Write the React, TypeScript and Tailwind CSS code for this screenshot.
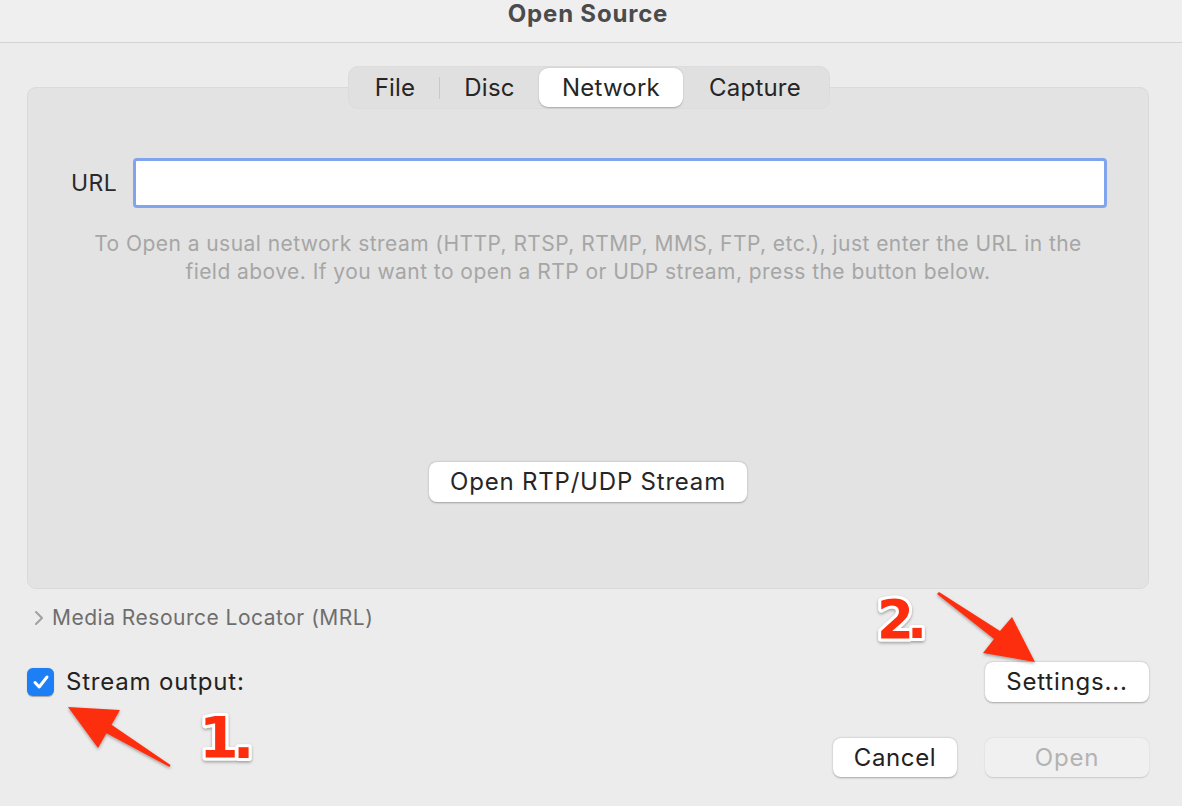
import React from "react";

function Arrows() {
  return (
    <svg className="absolute inset-0 pointer-events-none" width="1182" height="806" viewBox="0 0 1182 806">
      <defs>
        <filter id="sh" x="-20%" y="-20%" width="140%" height="140%">
          <feDropShadow dx="0" dy="1.5" stdDeviation="1.5" floodColor="#000" floodOpacity="0.35" />
        </filter>
      </defs>
      <polygon
        points="68,707 120,710 111.5,724.7 170.5,765.1 169.5,766.9 106.5,733.3 98,748"
        fill="#fc2f0c"
        filter="url(#sh)"
      />
      <polygon
        points="939,592 1000,631 1012,617 1035,662 983,653 994,639 937,594"
        fill="#fc2f0c"
        filter="url(#sh)"
      />
      <text
        x="199"
        y="758"
        fontFamily="'DejaVu Sans', 'Liberation Sans', sans-serif"
        fontWeight="bold"
        fontSize="57"
        fill="#fc2f0c"
        stroke="#ffffff"
        strokeWidth="6"
        strokeLinejoin="round"
        paintOrder="stroke"
        filter="url(#sh)"
        letterSpacing="-6"
      >
        1.
      </text>
      <text
        x="877"
        y="638"
        fontFamily="'DejaVu Sans', 'Liberation Sans', sans-serif"
        fontWeight="bold"
        fontSize="53"
        fill="#fc2f0c"
        stroke="#ffffff"
        strokeWidth="6"
        strokeLinejoin="round"
        paintOrder="stroke"
        filter="url(#sh)"
        letterSpacing="-7"
      >
        2.
      </text>
    </svg>
  );
}

export default function App() {
  return (
    <div className="relative w-[1182px] h-[806px] bg-[#ececec] flex flex-col overflow-hidden font-['Inter','Noto_Sans',sans-serif] text-[#222]">
      {/* Title bar */}
      <div className="h-[43px] shrink-0 bg-[#efefef] border-b border-[#d3d3d3] flex items-center justify-center">
        <span className="text-[24px] font-bold text-[#4b4b4b] tracking-[0.8px] -mt-[14px] -ml-[6px]">Open Source</span>
      </div>

      {/* Body */}
      <div className="flex flex-col px-[27px] pr-[33px]">
        {/* Tabs + panel */}
        <div className="flex flex-col mt-[23px]">
          <div className="relative z-10 self-center ml-[2px] flex items-center h-[43px] rounded-[10px] bg-[#e0e0e0] border border-[#dcdcdc] px-[2px] text-[24px] tracking-[0.2px] text-[#262626]">
            <div className="w-[88px] flex justify-center">File</div>
            <div className="w-px h-[22px] bg-[#c8c8c8]" />
            <div className="w-[99px] flex justify-center">Disc</div>
            <div className="w-[144px] h-[39px] rounded-[9px] bg-white shadow-[0_0.5px_1.5px_rgba(0,0,0,0.25)] flex items-center justify-center">Network</div>
            <div className="w-[144px] flex justify-center">Capture</div>
          </div>
          <div className="-mt-[22px] h-[502px] rounded-[9px] bg-[#e3e3e3] border border-[#dadada] flex flex-col">
            <div className="mt-[70px] flex items-center">
              <span className="w-[105px] pl-[43px] text-[23px] tracking-[0.4px] text-[#2a2a2a]">URL</span>
              <div className="w-[974px] h-[50px] rounded-[4px] border-[3px] border-[#81a5ec] bg-white" />
            </div>
            <div className="mt-[22px] text-center text-[21px] tracking-[0.45px] leading-[28px] text-[#a6a6a6]">
              To Open a usual network stream (HTTP, RTSP, RTMP, MMS, FTP, etc.), just enter the URL in the
              <br />
              field above. If you want to open a RTP or UDP stream, press the button below.
            </div>
            <div className="mt-[176px] flex justify-center">
              <div className="w-[318px] h-[40px] rounded-[8px] bg-white shadow-[0_0.5px_2px_rgba(0,0,0,0.3)] flex items-center justify-center text-[24px] tracking-[0.8px] text-[#262626]">
                Open RTP/UDP Stream
              </div>
            </div>
          </div>
        </div>

        {/* MRL */}
        <div className="mt-[17px] flex items-center h-[24px]">
          <svg width="12" height="16" viewBox="0 0 12 16" className="ml-[6px] mr-[7px]">
            <path d="M3 2 L9 8 L3 14" fill="none" stroke="#a0a0a0" strokeWidth="2" strokeLinecap="round" strokeLinejoin="round" />
          </svg>
          <span className="text-[21px] tracking-[0.5px] text-[#6e6e6e]">Media Resource Locator (MRL)</span>
        </div>

        {/* Stream output + Settings */}
        <div className="mt-[32px] flex items-center justify-between">
          <div className="flex items-center">
            <div className="w-[27px] h-[28px] rounded-[6px] bg-[#1d7ff6] flex items-center justify-center shadow-[0_0.5px_1px_rgba(0,0,0,0.3)]">
              <svg width="18" height="16" viewBox="0 0 18 16">
                <path d="M3 8.5 L7.2 13 L15 3" fill="none" stroke="#fff" strokeWidth="3" strokeLinecap="round" strokeLinejoin="round" />
              </svg>
            </div>
            <span className="ml-[12px] text-[24px] tracking-[0.8px] text-[#222]">Stream output:</span>
          </div>
          <div className="w-[164px] h-[40px] rounded-[8px] bg-white shadow-[0_0.5px_2px_rgba(0,0,0,0.3)] flex items-center justify-center text-[24px] tracking-[0.8px] text-[#222]">
            Settings...
          </div>
        </div>

        {/* Bottom buttons */}
        <div className="mt-[36px] flex justify-end gap-[28px]">
          <div className="w-[124px] h-[39px] rounded-[8px] bg-white shadow-[0_0.5px_2px_rgba(0,0,0,0.3)] flex items-center justify-center text-[24px] tracking-[0.6px] text-[#222]">
            Cancel
          </div>
          <div className="w-[164px] h-[39px] rounded-[8px] bg-[#f0f0f0] shadow-[0_0.5px_1.5px_rgba(0,0,0,0.15)] flex items-center justify-center text-[24px] tracking-[0.8px] text-[#b3b3b3]">
            Open
          </div>
        </div>
      </div>

      <Arrows />
    </div>
  );
}
